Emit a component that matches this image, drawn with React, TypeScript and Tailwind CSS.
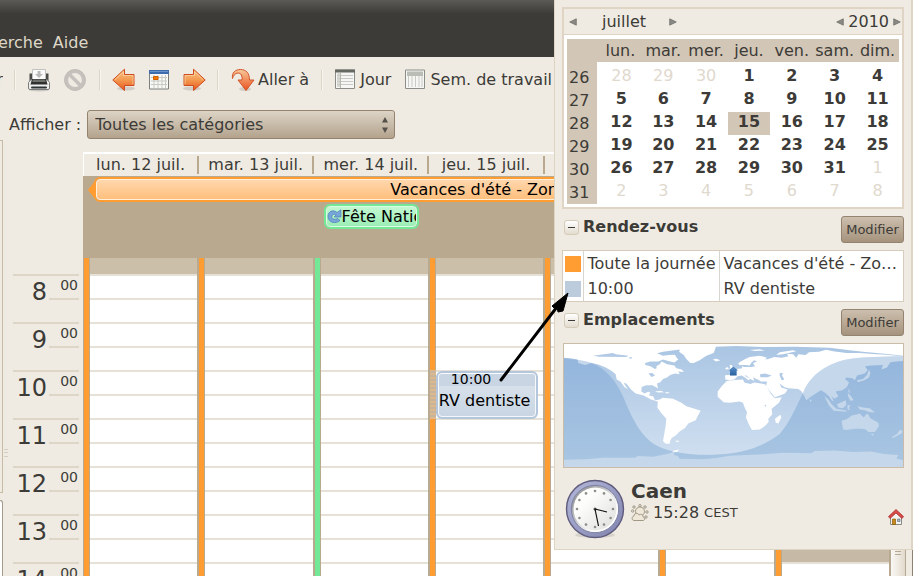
import React from 'react';

const weekDays = ['lun.', 'mar.', 'mer.', 'jeu.', 'ven.', 'sam.', 'dim.'];

const weeks = [
  { number: 26, days: [28, 29, 30, 1, 2, 3, 4] },
  { number: 27, days: [5, 6, 7, 8, 9, 10, 11] },
  { number: 28, days: [12, 13, 14, 15, 16, 17, 18] },
  { number: 29, days: [19, 20, 21, 22, 23, 24, 25] },
  { number: 30, days: [26, 27, 28, 29, 30, 31, 1] },
  { number: 31, days: [2, 3, 4, 5, 6, 7, 8] },
];

const columns = [
  { label: 'lun. 12 juil.', bar: 'bg-[#ff9d32]' },
  { label: 'mar. 13 juil.', bar: 'bg-[#ff9d32]' },
  { label: 'mer. 14 juil.', bar: 'bg-[#73e896]' },
  { label: 'jeu. 15 juil.', bar: 'bg-[#ff9d32]' },
  { label: 'ven. 16 juil.', bar: 'bg-[#ff9d32]' },
  { label: 'sam. 17 juil.', bar: 'bg-[#ff9d32]' },
  { label: 'dim. 18 juil.', bar: 'bg-[#ff9d32]' },
];

const hours = [8, 9, 10, 11, 12, 13, 14];
const slots = Array.from({ length: 14 }, (_, i) => i);

const appointments = [
  { color: 'bg-[#ff9d32]', time: 'Toute la journée', title: "Vacances d'été - Zo…" },
  { color: 'bg-[#bdccdd]', time: '10:00', title: 'RV dentiste' },
];

const LAND = [
  // North America
  'M3 3H450V9L400 13L345 20L300 26L282 31L300 38L318 36L336 35L341 44L346 50L334 59L316 54L300 50L286 56L262 56L246 60L247 66L262 70L276 78L281 76L280 70L290 64L296 56L312 64L334 68L340 76L356 80L363 87L346 86L350 94L336 92L322 96L312 104L300 108L292 118L282 122L285 137L278 132L268 127L250 127L236 132L235 146L244 152L256 147L262 150L258 158L270 160L276 172L290 170L284 176L264 170L242 158L218 152L204 140L190 122L182 120L194 138L184 132L172 116L161 110L158 94L146 84L128 74L106 65L86 60L66 66L46 60L44 50L22 46L3 44Z',
  // Greenland, Iceland
  'M361 3H458V14L452 30L430 38L410 52L392 60L382 60L370 48L362 36L348 26Z',
  'M449 50L460 47L472 52L460 56Z',
  'M276 146L292 144L304 148L286 149Z M306 148H318V151H308Z',
  // South America
  'M285 172L300 165L330 168L355 180L370 190L390 196L413 204L405 218L398 232L376 242L366 256L350 266L338 278L326 286L320 298L322 302L308 303L300 295L304 272L308 248L310 228L294 210L283 194Z',
  'M328 325L348 320L342 328L330 330Z M338 294H348V297H338Z',
  // Africa, Madagascar
  'M491 114L516 111L540 110L544 119L562 123L574 119L606 124L612 134L624 154L636 166L656 163L648 180L626 198L628 214L616 228L617 238L606 250L590 260L567 262L558 246L549 224L552 208L544 192L540 180L530 176L500 180L482 178L464 162L464 146L476 130Z',
  'M652 216L655 224L646 242L638 240L636 228Z',
  // Europe and Asia
  'M486 97L498 96L511 98L502 88L514 86L524 78L538 76L536 70L544 72L566 72L576 70L570 60L582 56L574 52L566 58L560 68L548 66L528 66L526 60L544 50L560 42L590 38L612 44L606 50L616 48L634 42L656 44L676 40L672 32L690 34L700 44L706 34L728 36L738 28L768 26L790 20L810 25L850 30L890 30L930 33L970 35L1000 38L1020 40V54L1000 56L982 58L972 74L955 80L960 66L925 68L906 70L914 82L905 92L882 98L876 112L868 106L850 104L846 108L858 118L852 132L838 142L818 146L826 160L814 168L806 160L812 176L806 172L798 160L786 150L774 142L764 148L740 164L730 172L724 160L716 146L706 138L676 136L664 132L650 122L655 134L674 140L666 152L636 163L624 150L609 130L612 116L594 116L584 110L570 104L574 114L562 108L550 98L544 98L562 108L556 112L546 104L536 98L524 100L514 110L500 112L487 110Z',
  'M496 80L502 76L500 66L506 66L512 76L510 82Z M486 78L492 72L498 76L492 80Z',
  'M560 21L590 19L606 22L576 24Z M640 36L650 28L690 22L700 25L660 34Z',
  'M3 3H1020V24L1020 38L980 34L900 26L860 22L800 14L700 11L600 12L520 9L456 11L3 10Z',
  // Japan and the islands
  'M918 80L922 90L918 104L904 112L884 118L882 112L900 108L912 96Z M855 136L862 148L858 150Z M854 150L864 160L872 172L862 174L856 162Z',
  'M784 160L796 170L806 184L820 198L850 203L850 207L812 204L798 188Z M822 184L840 176L848 172L850 186L840 196L826 194Z M853 188L862 186L858 196L862 202L854 200Z',
  'M884 190L900 194L920 196L936 208L920 208L904 202L890 200Z M740 168L746 174L742 178Z',
  // Australia, New Zealand
  'M836 234L854 228L866 218L884 214L890 212L902 224L910 214L914 212L922 226L946 240L948 250L936 268L916 268L908 260L896 258L876 258L850 262L840 260L838 248Z M924 273L934 274L928 279Z',
  'M1010 262L1019 264L1016 272L1004 278L990 286L986 283L1002 274Z',
  // Antarctica
  'M3 351L70 350L120 345L215 345L225 340L270 342L312 334L336 326L332 336L344 340L350 348L420 350L460 346L500 339L600 335L660 330L745 332L755 325L815 323L870 328L925 326L962 334L1006 337L1000 348L1020 352V373H3Z',
].join(' ');

const INLAND_WATER =
  'M591 94L606 92L626 98L614 103L592 103Z M650 90L660 90L657 98L664 110L656 112L650 98Z M604 188L610 186L608 192Z M256 92L268 90L276 98L266 102Z M90 38L150 30L158 34L196 38L190 42L110 41Z M196 44L208 42L204 48Z';

const DAYLIGHT =
  'M3 46C30 50 62 52 86 60C130 78 158 112 180 160C205 220 222 260 262 296C300 326 370 338 450 336C540 334 600 312 650 274C680 240 700 190 722 146C740 104 780 66 850 50C900 41 960 41 1020 40V3H3Z';

function WorldMap() {
  return (
    <svg viewBox="3 3 1017 370" preserveAspectRatio="none" className="block h-[123px] w-full">
      <defs>
        <linearGradient id="night" x1="0" y1="0" x2="0" y2="1">
          <stop offset="0" stopColor="#92b4dc" />
          <stop offset="1" stopColor="#a9c6e2" />
        </linearGradient>
        <linearGradient id="day" x1="0" y1="0" x2="0" y2="1">
          <stop offset="0" stopColor="#a9c5e3" />
          <stop offset="1" stopColor="#d3e1f1" />
        </linearGradient>
        <linearGradient id="pin" x1="0" y1="0" x2="0" y2="1">
          <stop offset="0" stopColor="#5a90c8" />
          <stop offset="1" stopColor="#2a62a0" />
        </linearGradient>
        <clipPath id="sun">
          <path d={DAYLIGHT} />
        </clipPath>
      </defs>
      <rect x="3" y="3" width="1017" height="370" fill="url(#night)" />
      <path d={LAND} fill="#c5d7eb" />
      <g clipPath="url(#sun)">
        <rect x="3" y="3" width="1017" height="370" fill="url(#day)" />
        <path d={LAND} fill="#fff" />
        <path d={INLAND_WATER} fill="#b2cae6" />
      </g>
      <path d="M511 71L525 83H521V98H501V83H497Z" fill="url(#pin)" />
    </svg>
  );
}

function PrintIcon() {
  return (
    <svg width="24" height="24" viewBox="0 0 24 24">
      <ellipse cx="12" cy="22" rx="10" ry="1.5" fill="#000" opacity=".15" />
      <path d="M2.500 5.500h2.500v8h14v-8h2.500v10h-19z" fill="#4a4b48" />
      <path d="M5.500 1.500h13v11h-13z" fill="#fafafa" stroke="#c2c2c0" />
      <path d="M10.500 3h3v3h2.500l-4 4-4-4h2.500z" fill="#b9b9b7" />
      <path d="M1.500 14.500L4 11.500h16l2.500 3v5.500q0 1.500-1.500 1.500H3q-1.500 0-1.500-1.500z" fill="#eeeeec" stroke="#7b7c79" />
      <path d="M5 11h14l1.500 5.500h-17z" fill="#2f3130" />
      <path d="M6 11.500h12l.8 2.500H5.200z" fill="#6f716d" />
      <path d="M5 19.500h14" stroke="#2e3436" strokeWidth="2" strokeLinecap="round" />
    </svg>
  );
}

function StopIcon() {
  return (
    <svg width="24" height="24" viewBox="0 0 24 24" fill="none">
      <circle cx="12" cy="12" r="8.800" stroke="#c6c1bc" strokeWidth="3.800" />
      <path d="M6 6l12 12" stroke="#c6c1bc" strokeWidth="3.500" />
      <circle cx="12" cy="12" r="10.500" stroke="#bab5b0" strokeWidth=".6" />
    </svg>
  );
}

function ArrowIcon({ flip = false }: { flip?: boolean }) {
  return (
    <svg width="24" height="24" viewBox="0 0 24 24" className={flip ? '-scale-x-100' : ''}>
      <defs>
        <linearGradient id="arrow" x1="0" y1="0" x2="0" y2="1">
          <stop offset="0" stopColor="#f8c787" />
          <stop offset=".5" stopColor="#f39a50" />
          <stop offset="1" stopColor="#e8551f" />
        </linearGradient>
      </defs>
      <ellipse cx="14" cy="20.500" rx="9" ry="2" fill="#000" opacity=".12" />
      <path d="M.8 12L12.500 1.200V6.500H22V17.500H12.500V22.500Z" fill="url(#arrow)" stroke="#cf4a1c" />
      <path d="M2.500 12L11.500 3.700V7.500H21V16.500" fill="none" stroke="#fbd9ae" strokeWidth=".7" />
    </svg>
  );
}

function TodayIcon() {
  return (
    <svg width="22" height="22" viewBox="0 0 22 22">
      <path d="M1.500 1.500h19v18.500h-19z" fill="#f8f8f6" stroke="#7d7f7b" />
      <path d="M1 1h20v4H1z" fill="#3d6cae" />
      <path d="M2 2h18v1H2z" fill="#6b94cb" />
      <path d="M3 8.500h16M3 12h16M3 15.500h16M6 6v13M10 6v13M14 6v13M17.500 6v13" stroke="#c6cac2" />
      <path d="M5.500 7.500h4.500v3h-4.500z" fill="#f57900" stroke="#d25f00" />
    </svg>
  );
}

function JumpIcon() {
  return (
    <svg width="24" height="24" viewBox="0 0 24 24">
      <defs>
        <linearGradient id="jump" x1="0" y1="0" x2="0" y2="1">
          <stop offset="0" stopColor="#f8c99a" />
          <stop offset="1" stopColor="#e9521f" />
        </linearGradient>
      </defs>
      <ellipse cx="14" cy="21" rx="6" ry="2" fill="#000" opacity=".12" />
      <path d="M1.500 10.500C.5 4.500 4.500 1.500 9.500 1.500C15 1.500 18.500 5 18.500 12H23L15 22.500L7 12H11C11.500 8 10 5 7 5C4 5 2.500 7.500 1.500 10.500Z" fill="url(#jump)" stroke="#d2552b" strokeLinejoin="round" />
    </svg>
  );
}

function DayIcon() {
  return (
    <svg width="21" height="21" viewBox="0 0 21 21">
      <path d="M.5 1h19v18.500H.5z" fill="#f6f6f4" stroke="#8b8d88" />
      <path d="M0 .5h20v3H0z" fill="#666a63" />
      <path d="M2 4h3v14H2z" fill="#d6d9d3" />
      <path d="M2 6.500h16M2 9.500h16M2 12.500h16M2 15.500h16" stroke="#c8cbc3" />
      <path d="M5.500 4v15" stroke="#b5b8b0" />
    </svg>
  );
}

function WorkWeekIcon() {
  return (
    <svg width="21" height="21" viewBox="0 0 21 21">
      <path d="M.5 1h19v18.500H.5z" fill="#f6f6f4" stroke="#8b8d88" />
      <path d="M2 2.500h16V7H2z" fill="#b9bdb5" />
      <path d="M3.500 7v11M7 7v11M10.500 7v11M14 7v11M17 7v11" stroke="#c8cbc3" />
    </svg>
  );
}

function Clock() {
  const marks = Array.from({ length: 12 }, (_, i) => (i * Math.PI) / 6);
  return (
    <svg width="60" height="60" viewBox="0 0 60 60">
      <defs>
        <linearGradient id="rim" x1="0" y1="0" x2="1" y2="1">
          <stop offset="0" stopColor="#b4b8dc" />
          <stop offset="1" stopColor="#8083ac" />
        </linearGradient>
        <linearGradient id="face" x1="0" y1="0" x2="1" y2="1">
          <stop offset=".3" stopColor="#fdfdfc" />
          <stop offset="1" stopColor="#dededb" />
        </linearGradient>
        <linearGradient id="bevel" x1="0" y1="0" x2="1" y2="1">
          <stop offset=".2" stopColor="#9c9ea0" />
          <stop offset=".7" stopColor="#fff" />
        </linearGradient>
      </defs>
      <ellipse cx="30" cy="56" rx="20" ry="3" fill="#000" opacity=".1" />
      <circle cx="30" cy="30" r="28.500" fill="url(#rim)" stroke="#5f5b7c" strokeWidth="1.400" />
      <circle cx="30" cy="30" r="23.700" fill="url(#bevel)" stroke="#8083a3" />
      <circle cx="30" cy="30" r="21.500" fill="url(#face)" />
      {marks.map((angle) => (
        <circle key={angle} cx={30 + 18 * Math.sin(angle)} cy={30 - 18 * Math.cos(angle)} r="1.300" fill="#8c8e89" />
      ))}
      <circle cx="30" cy="30" r="1.500" fill="#555" />
      <path d="M30 30L42 33M30 30L33.500 47" stroke="#111" strokeWidth="1.200" />
    </svg>
  );
}

function WeatherIcon() {
  return (
    <svg width="18" height="18" viewBox="0 0 18 18" fill="#efe8d8" stroke="#968d7b" strokeWidth=".9">
      <g fill="none">
        <circle cx="3" cy="3" r="1.200" /><circle cx="9" cy="1.700" r="1.200" /><circle cx="14" cy="3" r="1.200" />
        <circle cx="16" cy="8" r="1.200" /><circle cx="15" cy="13" r="1.200" /><circle cx="1.700" cy="7" r="1.200" />
      </g>
      <circle cx="9" cy="7.500" r="4.500" />
      <path d="M3 16.500C.5 16.500.5 12.500 3 12C3 9 7 8.500 8 11C10 9.500 12.500 11 12 13C14.500 13.500 14 16.500 12 16.500Z" />
    </svg>
  );
}

function HomeIcon() {
  return (
    <svg width="16" height="16" viewBox="0 0 16 16">
      <path d="M2.500 7.500L8 3L13.500 7.500V15.500H2.500Z" fill="#f3f3f1" stroke="#888a85" />
      <path d="M.5 7.500L8 .5L15.500 7.500L14 9.500L8 4L2 9.500Z" fill="#d94a4a" stroke="#a93434" strokeWidth=".8" />
      <path d="M4.500 10h3v5.500h-3z" fill="#c78a1e" stroke="#8f5902" strokeWidth=".7" />
      <path d="M9.500 10h2.500v2.500H9.500z" fill="#9db8d8" stroke="#777" strokeWidth=".7" />
    </svg>
  );
}

function Triangle({ right = false }: { right?: boolean }) {
  return (
    <svg width="8" height="8" viewBox="0 0 8 8" className={right ? '-scale-x-100' : ''}>
      <path d="M7.300 .8V7.200L.7 4Z" fill="#8b8983" stroke="#696761" strokeWidth=".7" />
    </svg>
  );
}

function Separator() {
  return <div className="h-5 w-0.5 border-l border-[#ddd5c5] bg-[#f8f5f0]" />;
}

function SectionHeader({ title }: { title: string }) {
  return (
    <div className="flex h-[27px] items-start">
      <button aria-label={`Replier ${title}`} className="mt-1 ml-0.5 grid size-[15px] place-items-center rounded-[3px] border border-[#d5cbb9] bg-gradient-to-b from-white to-[#e3dccf]">
        <span className="h-px w-[7px] bg-[#3c3b37]" />
      </button>
      <h2 className="ml-1 flex-1 text-base leading-[21px] font-bold">{title}</h2>
      <button className="h-[27px] w-[63px] rounded-[3px] border border-[#93836f] bg-gradient-to-b from-[#cdbfae] to-[#a5937d] text-[13px]">Modifier</button>
    </div>
  );
}

function MonthTable() {
  return (
    <div className="border-2 border-[#e0d5c4] bg-white">
      <div className="flex h-[26px] items-center border-b border-[#ded3c1] bg-[#efebe3] pr-px pl-[5px]">
        <button aria-label="Mois précédent"><Triangle /></button>
        <span className="w-[92px] pl-[25px]">juillet</span>
        <button aria-label="Mois suivant"><Triangle right /></button>
        <div className="ml-auto flex items-center gap-1">
          <button aria-label="Année précédente"><Triangle /></button>
          <span>2010</span>
          <button aria-label="Année suivante"><Triangle right /></button>
        </div>
      </div>
      <div className="px-[3px] pt-1 pb-[3px]">
        <table className="w-full table-fixed border-collapse text-center">
          <thead>
            <tr className="h-[23px] bg-[#d2c6b6] leading-[23px]">
              <th className="w-8 p-0" />
              {weekDays.map((day) => (
                <th key={day} className="p-0 font-normal">{day}</th>
              ))}
            </tr>
          </thead>
          <tbody>
            <tr className="h-1"><td className="border-r-4 border-white bg-[#d2c6b6] p-0" /></tr>
            {weeks.map((week, row) => (
              <tr key={week.number} className="h-[23px]">
                <th className="border-r-4 border-white bg-[#d2c6b6] p-0 pl-0.5 text-left leading-[23px] font-normal">{week.number}</th>
                {week.days.map((day, i) => {
                  const outside = (row === 0 && day > 20) || (row === 4 && day === 1) || row === 5;
                  const today = week.number === 28 && day === 15;
                  return (
                    <td key={i} className={`p-0 align-top leading-5 ${outside ? 'text-[#e0d9ce]' : 'font-bold'} ${today ? 'bg-[#d2c6b6]' : ''}`}>{day}</td>
                  );
                })}
              </tr>
            ))}
          </tbody>
        </table>
      </div>
    </div>
  );
}

function CalendarPopup() {
  return (
    <aside className="absolute top-0 right-0 flex h-[550px] w-[359px] flex-col gap-[7px] border-r-2 border-b border-l border-[#ded4c4] bg-[#efebe3] px-[7px] pt-[7px]">
      <MonthTable />
      <SectionHeader title="Rendez-vous" />
      <div className="border border-[#d6ccbb] bg-white">
        <table className="w-full table-fixed">
          <tbody>
            {appointments.map((item) => (
              <tr key={item.time} className="h-[25px]">
                <td className="w-5 border-r border-[#d8d4ce] p-0"><div className={`ml-0.5 size-4 ${item.color}`} /></td>
                <td className="w-[136px] border-r border-[#d8d4ce] p-0 pl-1 whitespace-nowrap">{item.time}</td>
                <td className="truncate p-0 pl-1">{item.title}</td>
              </tr>
            ))}
          </tbody>
        </table>
      </div>
      <SectionHeader title="Emplacements" />
      <div className="ml-px border border-[#c9bda9]"><WorldMap /></div>
      <div className="flex pt-1 pl-[3px]">
        <Clock />
        <div className="ml-[6px] flex-1">
          <div className="text-xl leading-6 font-bold">Caen</div>
          <div className="flex items-center leading-5">
            <WeatherIcon />
            <span className="ml-1">15:28</span>
            <span className="ml-[5px] text-[13px]">CEST</span>
          </div>
        </div>
        <button aria-label="Domicile" className="mt-4 self-center"><HomeIcon /></button>
      </div>
    </aside>
  );
}

function Toolbar() {
  return (
    <div className="flex h-[45px] items-center overflow-hidden whitespace-nowrap">
      <span className="flex w-[3px] justify-end overflow-hidden">r</span>
      <div className="ml-[11px]"><Separator /></div>
      <button aria-label="Imprimer" className="ml-[11px]"><PrintIcon /></button>
      <button aria-label="Arrêter" className="ml-3"><StopIcon /></button>
      <div className="mr-[11px] ml-3"><Separator /></div>
      <button aria-label="Précédent"><ArrowIcon /></button>
      <button aria-label="Aujourd'hui" className="mx-3"><TodayIcon /></button>
      <button aria-label="Suivant"><ArrowIcon flip /></button>
      <div className="mr-3 ml-[11px]"><Separator /></div>
      <button className="flex items-center gap-[3px]"><JumpIcon />Aller à</button>
      <div className="mr-3 ml-3"><Separator /></div>
      <button className="flex items-center gap-1"><DayIcon />Jour</button>
      <button className="ml-[14px] flex items-center gap-1"><WorkWeekIcon />Sem. de travail</button>
    </div>
  );
}

function HourColumn() {
  return (
    <div className="w-[66px] pt-[134px]">
      {hours.map((hour) => (
        <div key={hour} className="flex h-12 border-t-2 border-[#dcd5c8]">
          <div className="w-9 pr-[2px] text-right text-2xl leading-8">{hour}</div>
          <div className="h-6 flex-1 border-b-2 border-[#dcd5c8] pr-px text-right text-sm leading-[18px]">00</div>
        </div>
      ))}
    </div>
  );
}

function DentistEvent() {
  return (
    <div className="absolute top-[113px] left-[6px] h-12 w-[102px] rounded-md border-2 border-[#b4c6db] bg-gradient-to-b from-[#dde5ee] to-[#c9d5e3] text-black">
      <div className="h-full overflow-hidden rounded-[4px] border border-white/80">
        <div className="h-3 bg-[#c9d5e3] pl-3 text-sm leading-[10px]">10:00</div>
        <div className="leading-[30px] whitespace-nowrap">RV dentiste</div>
      </div>
    </div>
  );
}

function WeekView() {
  return (
    <div className="mt-3 ml-1 flex min-w-0 flex-1 flex-col">
      <div className="grid h-6 shrink-0 grid-cols-7 border-t-2 border-l border-white text-center">
        {columns.map((col) => (
          <div key={col.label} className="mt-0.5 h-[18px] border-r-2 border-[#b9a98e] leading-[18px]">{col.label}</div>
        ))}
      </div>
      <div className="h-[82px] shrink-0 bg-[#b9a98e] text-black">
        <div className="flex items-center pt-px pl-[5px]">
          <div className="h-0 w-0 border-y-[9px] border-r-[7px] border-y-transparent border-r-[#ff9d32]" />
          <div className="-ml-px h-[25px] flex-1 rounded-l-md border-2 border-[#ff9d32]">
            <div className="h-full rounded-l-[4px] border border-[#fff0dc] bg-gradient-to-b from-[#ffd7ad] to-[#ffbf7c] pr-[10px] text-center leading-5">Vacances d'été - Zone A</div>
          </div>
        </div>
        <div className="grid grid-cols-7">
          <div className="col-start-3 mt-0.5 ml-[10px] h-[25px] w-[95px] rounded-md border-2 border-[#73e896]">
            <div className="flex h-full items-center overflow-hidden rounded-[4px] border border-[#d9fbe4] bg-gradient-to-b from-[#c3f7d2] to-[#9beeb5] whitespace-nowrap">
              <svg width="15" height="15" viewBox="0 0 15 15" className="shrink-0">
                <path d="M10 3.500L14 .8V8H7L9.200 5.800C7 4.500 4.500 6 4.800 8C5.200 10.300 8 11 10.500 9.300L13 11.500C8.500 15.500 1 13.500 1 7.500C1 1.500 7 .5 10 3.500Z" fill="#79a6d9" stroke="#4a7dbb" strokeWidth=".7" />
              </svg>
              Fête Nationale
            </div>
          </div>
        </div>
      </div>
      <div className="grid grid-cols-7">
        {columns.map((col, index) => (
          <div key={col.label} className="relative flex border-l border-[#b9a98e]">
            <div className={`w-[5px] ${col.bar}`} />
            <div className="flex-1 border-r border-l border-[#b9a98e]">
              <div className="h-4 bg-[#cbbfa9]" />
              {slots.map((slot) => (
                <div key={slot} className={`h-6 border-t-2 border-[#e6e1d7] ${index === 6 && slot < 12 ? 'bg-[#c6b9a5]' : 'bg-white'}`} />
              ))}
            </div>
            {index === 3 && (
              <>
                <div className="absolute top-[112px] left-0 h-[49px] w-[6px] bg-[repeating-linear-gradient(0deg,#dcb88e_0_2px,#c8b49a_2px_4px)]" />
                <DentistEvent />
              </>
            )}
          </div>
        ))}
      </div>
    </div>
  );
}

export default function App() {
  return (
    <div className="relative flex h-screen flex-col overflow-hidden bg-[#efebe3] font-['DejaVu_Sans',sans-serif] text-base text-[#3c3b37]">
      <nav className="flex h-[57px] shrink-0 items-end gap-[10px] bg-[linear-gradient(#5b5a55,#3c3b37_14px)] pb-[2px] text-[#dfd8c8]">
        <a href="#recherche" className="-ml-0.5">erche</a>
        <a href="#aide">Aide</a>
      </nav>
      <div className="shrink-0"><Toolbar /></div>
      <div className="flex h-[38px] shrink-0 items-start gap-[6px] pt-2 pl-[9px]">
        <label htmlFor="category" className="leading-[29px]">Afficher :</label>
        <div className="relative">
          <select id="category" className="block h-[29px] w-[308px] appearance-none rounded-[3px] border border-[#93836f] bg-gradient-to-b from-[#ddd4c6] to-[#b3a38d] pl-[7px]">
            <option>Toutes les catégories</option>
          </select>
          <svg width="8" height="18" viewBox="0 0 8 18" className="pointer-events-none absolute top-[6px] right-[6px]">
            <path d="M1 6.500L4 1L7 6.500ZM1 11.500H7L4 17Z" fill="#55504a" />
          </svg>
        </div>
      </div>
      <div className="flex min-h-0 flex-1">
        <div className="flex w-[3px] flex-col gap-[7px]">
          <div className="h-[353px] border-y border-r border-[#c8bba5]" />
          <div className="flex-1 rounded-tr-sm border-t border-r border-[#a39c8e] bg-white" />
        </div>
        <div className="w-[10px] px-px pt-[309px]">
          <div className="h-2 w-1 border-y border-[#d5cdbf] py-[2px]">
            <div className="h-px bg-[#d5cdbf]" />
          </div>
        </div>
        <HourColumn />
        <WeekView />
        <div className="flex w-4 flex-col items-center border-x border-[#b5a894] bg-gradient-to-r from-[#faf8f5] to-[#e2dacc] pt-[411px]">
          <div className="h-1 w-[6px] border-y border-[#b5a894]" />
        </div>
        <div className="w-[7px] border-r border-[#8d8372]" />
      </div>
      <CalendarPopup />
      <svg width="72" height="92" viewBox="0 0 72 92" className="pointer-events-none absolute top-[291px] left-[498px]">
        <path d="M3 89L62 12" stroke="#000" strokeWidth="3" strokeLinecap="round" />
        <path d="M70 2L54 15L57 18L59 16L60 21L65 20Z" fill="#000" stroke="#000" />
      </svg>
    </div>
  );
}
